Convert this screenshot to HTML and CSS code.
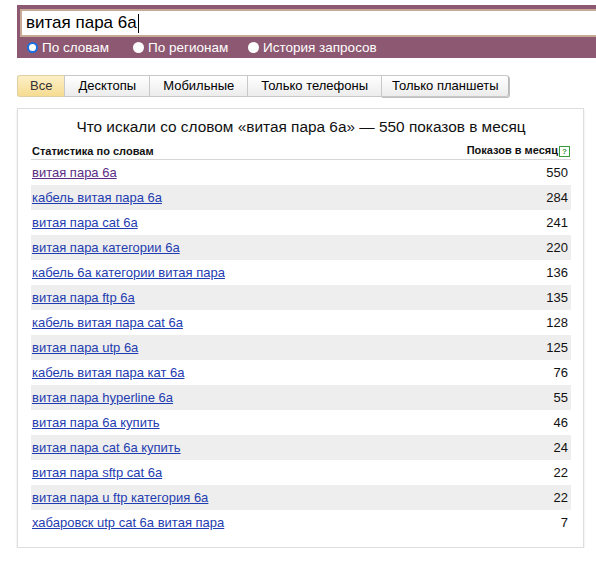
FILE: index.html
```html
<!DOCTYPE html>
<html lang="ru">
<head>
<meta charset="utf-8">
<link rel="stylesheet" href="styles.css">
</head>
<body>
<div class="search">
  <div class="input"><span class="query">витая пара 6а</span><span class="caret"></span></div>
  <div class="radios">
    <label class="radio r1"><span class="dot on"></span>По словам</label>
    <label class="radio r2"><span class="dot"></span>По регионам</label>
    <label class="radio"><span class="dot"></span>История запросов</label>
  </div>
</div>
<div class="tabs">
  <span class="tab active">Все</span>
  <span class="tab">Десктопы</span>
  <span class="tab">Мобильные</span>
  <span class="tab">Только телефоны</span>
  <span class="tab last">Только планшеты</span>
</div>
<div class="panel">
  <div class="title">Что искали со словом «витая пара 6а» — 550 показов в месяц</div>
  <div class="table">
    <div class="head"><span>Статистика по словам</span><span class="hr">Показов в месяц<span class="help">?</span></span></div>
    <div class="row"><a class="visited">витая пара 6а</a><span>550</span></div>
    <div class="row alt"><a>кабель витая пара 6а</a><span>284</span></div>
    <div class="row"><a>витая пара cat 6а</a><span>241</span></div>
    <div class="row alt"><a>витая пара категории 6а</a><span>220</span></div>
    <div class="row"><a>кабель 6а категории витая пара</a><span>136</span></div>
    <div class="row alt"><a>витая пара ftp 6а</a><span>135</span></div>
    <div class="row"><a>кабель витая пара cat 6а</a><span>128</span></div>
    <div class="row alt"><a>витая пара utp 6а</a><span>125</span></div>
    <div class="row"><a>кабель витая пара кат 6а</a><span>76</span></div>
    <div class="row alt"><a>витая пара hyperline 6а</a><span>55</span></div>
    <div class="row"><a>витая пара 6а купить</a><span>46</span></div>
    <div class="row alt"><a>витая пара cat 6а купить</a><span>24</span></div>
    <div class="row"><a>витая пара sftp cat 6а</a><span>22</span></div>
    <div class="row alt"><a>витая пара u ftp категория 6а</a><span>22</span></div>
    <div class="row"><a>хабаровск utp cat 6а витая пара</a><span>7</span></div>
  </div>
</div>
</body>
</html>
```
FILE: styles.css
```css
html, body { margin: 0; padding: 0; background: #fff; }
body { font-family: Arial, "Liberation Sans", sans-serif; color: #000; }

.search {
  margin: 5px 0 0 17px;
  background: #8d5871;
  padding: 4px 0 0 3px;
  height: 49px;
}
.input {
  height: 24px;
  background: #fff;
  border-top: 2px solid #c7aa96;
  border-bottom: 2px solid #c7aa96;
  border-left: 2px solid #c7aa96;
  display: flex;
  align-items: center;
  padding-left: 4px;
}
.query { font-size: 17px; color: #000; }
.caret { display: inline-block; width: 1px; height: 19px; background: #000; margin-left: 1px; }

.radios { display: flex; height: 21px; align-items: center; padding-left: 7px; }
.radio { display: flex; align-items: center; color: #fff; font-size: 13.5px; }
.radio.r1 { width: 106px; }
.radio.r2 { width: 115px; }
.dot {
  width: 11px; height: 11px; border-radius: 50%;
  background: #fff; margin-right: 4px; box-sizing: border-box;
}
.dot.on { border: 2px solid #1a6fe0; background: #fff; }

.tabs { display: flex; margin: 17px 0 0 17px; }
.tab {
  height: 20px; line-height: 20px;
  font-size: 13px; color: #000;
  padding: 0 13px;
  border: 1px solid #c8c8c8;
  border-right: none;
  background: linear-gradient(#ffffff, #ececec);
}
.tab.last { padding: 0 10px; border-right: 1px solid #b8b8b8; border-radius: 0 3px 3px 0; box-shadow: 1px 1px 0 #c0c0c0; }
.tab.active {
  background: linear-gradient(#fdf0c8, #f6dc91);
  border-color: #e0cfa0;
  color: #333;
  padding: 0 12px;
  border-radius: 3px 0 0 3px;
}

.panel {
  margin: 11px 0 0 17px;
  width: 567px;
  border: 1px solid #dedede;
  box-shadow: 0 2px 2px rgba(0,0,0,0.12);
  padding: 9px 12px 12px 13px;
  box-sizing: border-box;
}
.title { text-align: center; font-size: 15.4px; line-height: 18px; color: #111; }
.table { margin-top: 6px; }
.head {
  display: flex; justify-content: space-between; align-items: center;
  font-size: 11px; font-weight: bold; color: #111;
  height: 17px; padding: 0 1px 0 1px;
  border-bottom: 1px solid #d6d6d6;
}
.help {
  display: inline-block; width: 9px; height: 9px; line-height: 9px;
  border: 1px solid #3a9a3a; color: #3a9a3a; font-size: 8px; text-align: center;
  margin-left: 1px; font-weight: bold;
}
.row {
  display: flex; justify-content: space-between; align-items: center;
  height: 25px; font-size: 13px; padding: 0 3px 0 1px;
}
.row.alt { background: #eeeeee; }
.row a { color: #1f3db0; text-decoration: underline; }
.row a.visited { color: #5b2d84; }
.row span { color: #111; }
```
